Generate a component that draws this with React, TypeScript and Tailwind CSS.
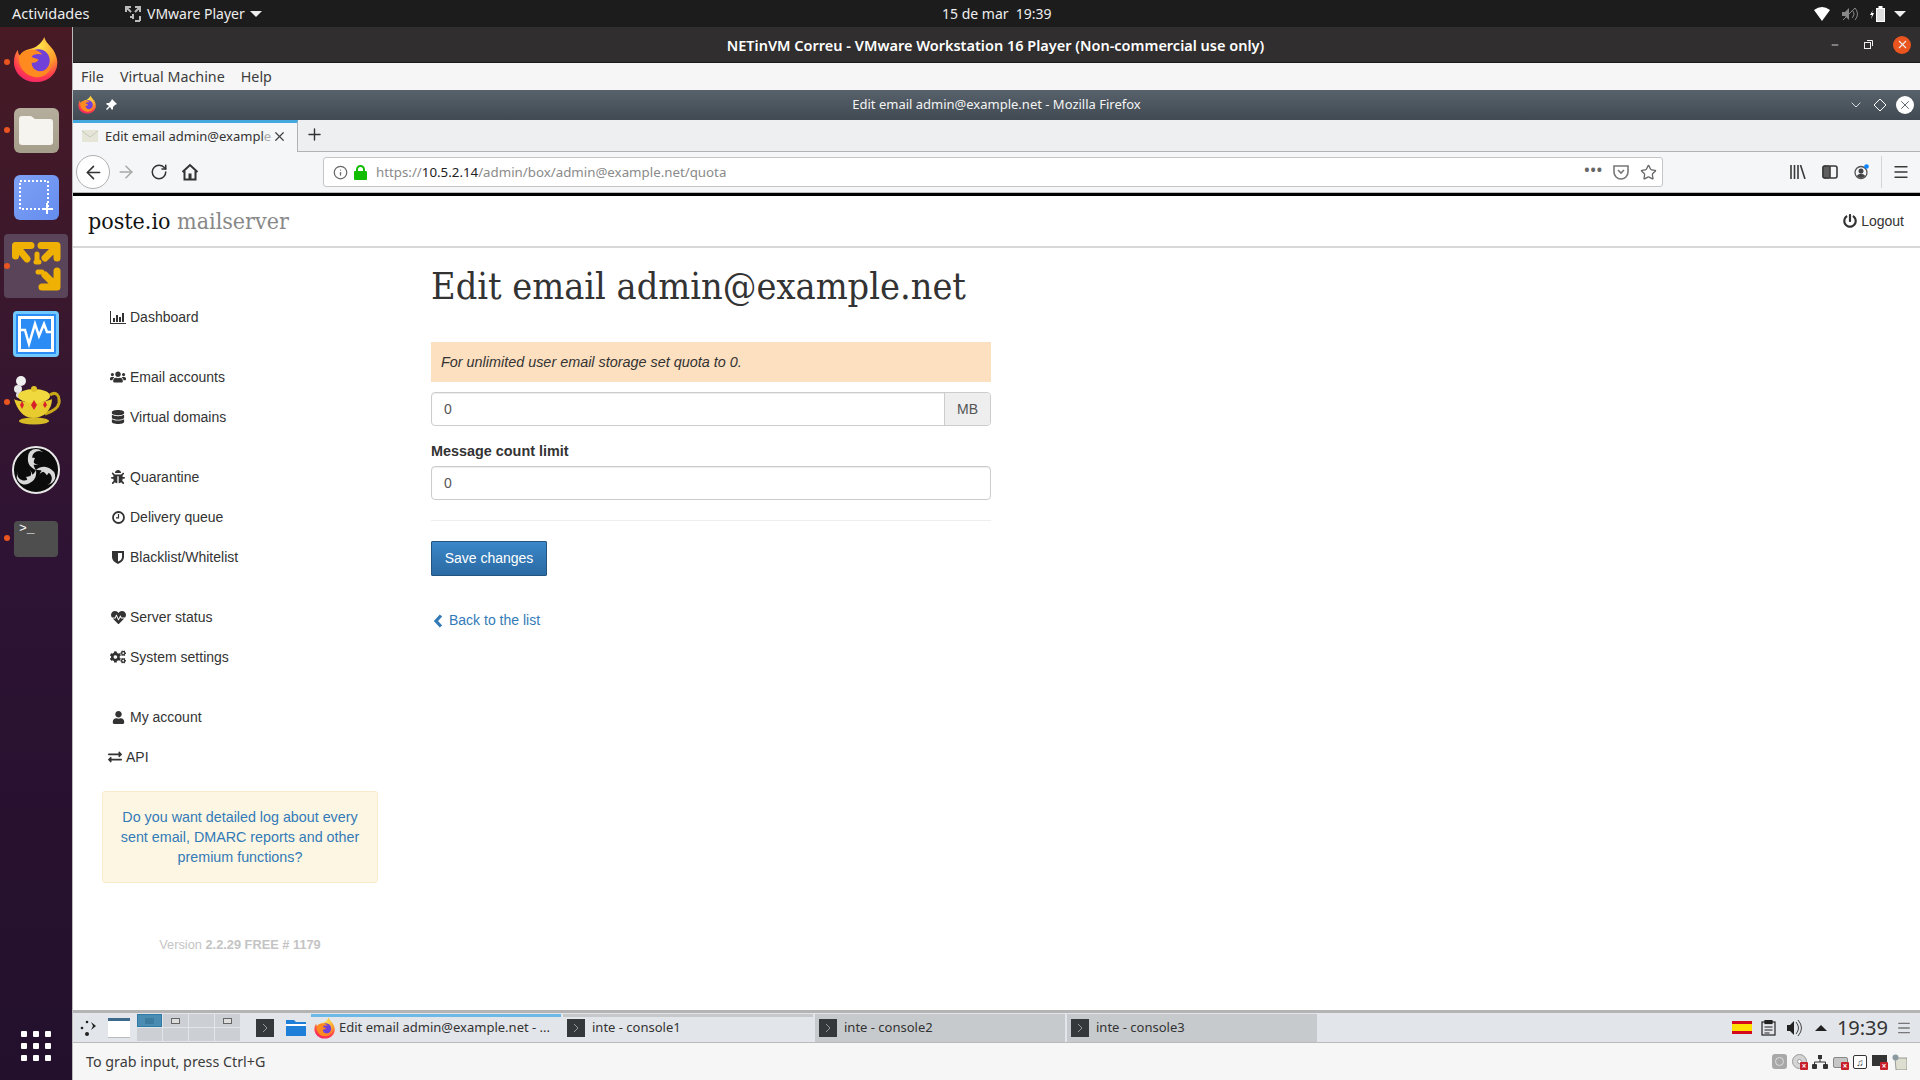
import React from "react";
import { FaUsers, FaDatabase, FaBug, FaHeartbeat, FaCogs, FaUser, FaExchangeAlt, FaPowerOff } from "react-icons/fa";
import { X, Plus, ArrowLeft, ArrowRight, RotateCw, Info, Star, Menu, ChevronDown, Minus } from "lucide-react";

const UB = "font-['Noto_Sans',sans-serif]";
const LS = "font-['Liberation_Sans',Arial,sans-serif]";
const SL = "font-['DejaVu_Serif_Condensed','Liberation_Serif',serif]";

function Firefox({ s = 48 }: { s?: number }) {
  return (
    <svg width={s} height={s} viewBox="0 0 48 48">
      <defs>
        <radialGradient id="ffa" cx="0.6" cy="0.2" r="0.95">
          <stop offset="0" stopColor="#ffe14d" />
          <stop offset="0.45" stopColor="#ff9a2a" />
          <stop offset="0.75" stopColor="#ff3750" />
          <stop offset="1" stopColor="#e31587" />
        </radialGradient>
      </defs>
      <path d="M32 1c1 5 5 8 9 13 5 8 6 17 1 24-5 7-12 9-19 9C11 47 1 38 1 27c0-5 1-9 4-13 0 3 1 5 2 6 2-4 6-6 11-7 5-1 11-5 14-12z" fill="url(#ffa)" />
      <circle cx="26" cy="25" r="11.500" fill="#7040d8" />
      <path d="M6 21c3-5 8-7 13-7 5 0 9 2 11 5-4-1-8-1-11 2 2 2 5 2 7 3-1 3-5 4-7 3 0 5 4 9 9 9 5 0 9-3 11-8 0 9-8 15-16 14C13 41 5 32 6 21z" fill="#ff8a1f" />
    </svg>
  );
}

function Dock() {
  const dot = <span className="absolute left-[4px] top-1/2 -mt-[3px] size-[6px] rounded-full bg-[#e9541f]" />;
  return (
    <aside className="w-[72px] shrink-0 flex flex-col items-center bg-linear-to-b from-[#471a24] via-[#2e1334] to-[#22102c] relative">
      <div className="h-[68px] w-full relative flex items-center justify-center mt-[1px]">{dot}<span className="flex -mt-[5px]"><Firefox s={47} /></span></div>
      <div className="h-[68px] w-full relative flex items-center justify-center">
        {dot}
        <div className="size-[45px] rounded-[6px] bg-linear-to-b from-[#b5ae9c] to-[#a59e8b] flex items-center justify-center">
          <svg width="34" height="30" viewBox="0 0 34 30"><path d="M0 4a3 3 0 0 1 3-3h9l4 3h15a3 3 0 0 1 3 3v20a3 3 0 0 1-3 3H3a3 3 0 0 1-3-3z" fill="#f6f4ef" /></svg>
        </div>
      </div>
      <div className="h-[68px] w-full flex items-center justify-center">
        <div className="size-[45px] -mt-[2px] rounded-[6px] bg-linear-to-br from-[#7ea2f5] to-[#648cee] flex items-center justify-center">
          <svg width="36" height="36" viewBox="0 0 36 36"><rect x="2" y="2" width="28" height="28" fill="none" stroke="#fff" strokeWidth="2" strokeDasharray="2 2" /><path d="M29 24v11M24 30h11" stroke="#fff" strokeWidth="2" /></svg>
        </div>
      </div>
      <div className="h-[68px] w-full relative flex items-center justify-center">
        <div className="w-[64px] h-[64px] rounded-[4px] bg-[#5a4459]">
          <svg width="64" height="64" viewBox="0 0 64 64" fill="none" stroke="#efb103" strokeWidth="7" strokeLinecap="round" strokeLinejoin="round">
            <path d="M27 11.500H11.500V22M13 13l10 12M37 11.500H53V24M52 13 41 24M53 37V53H38M52 52 41 41" />
            <path d="M33 20v6M35 28h-3M38 38h-4" strokeWidth="5" />
          </svg>
        </div>
        {dot}
      </div>
      <div className="h-[68px] w-full flex items-center justify-center">
        <div className="size-[46px] rounded-[4px] bg-[#2b8cf5] border-[3px] border-[#70c8ff] flex items-center justify-center">
          <svg width="36" height="36" viewBox="0 0 36 36"><rect x="1.500" y="1.500" width="33" height="33" fill="none" stroke="#fff" strokeWidth="3" /><path d="M2 14h5l4 14 6-20 4 12 5-12 3 8h9" fill="none" stroke="#fff" strokeWidth="2.500" /></svg>
        </div>
      </div>
      <div className="h-[68px] w-full relative flex items-center justify-center">
        {dot}
        <svg className="-mt-[4px]" width="50" height="50" viewBox="0 0 50 50">
          <circle cx="10" cy="6" r="5" fill="#f0f0f0" /><circle cx="7" cy="14" r="4" fill="#e8e8e8" /><circle cx="8" cy="20" r="3" fill="#ddd" />
          <path d="M39 20c6-4 10 0 9 8-1 6-8 9-14 11" fill="none" stroke="#c9a818" strokeWidth="3" />
          <path d="M3 24c5 4 32 4 38 0 0 11-8 19-19 19C12 43 6 34 3 24z" fill="#e8cb2f" />
          <ellipse cx="23" cy="21" rx="16" ry="7" fill="#f0d93f" /><circle cx="23" cy="14" r="3" fill="#e2c42a" /><ellipse cx="23" cy="46" rx="15" ry="3.500" fill="#d7bb26" />
          <path d="M23 25l3 5-3 5-3-5zM11 26l2 4-2 4-2-4zM34 26l2 4-2 3-2-3z" fill="#d8202a" />
        </svg>
      </div>
      <div className="h-[68px] w-full flex items-center justify-center">
        <svg width="48" height="48" viewBox="0 0 48 48">
          <circle cx="24" cy="24" r="23" fill="#0b0b0b" stroke="#e8e8e8" strokeWidth="2" />
          {[0, 120, 240].map((a) => (
            <g key={a} transform={`rotate(${a} 24 24)`}>
              <circle cx="24" cy="11" r="8" fill="#d8d8d8" />
              <circle cx="27" cy="12" r="7" fill="#0b0b0b" />
              <path d="M16 11c-1 7 3 11 8 13-3-4-3-8-1-12z" fill="#d8d8d8" />
            </g>
          ))}
        </svg>
      </div>
      <div className="h-[68px] w-full relative flex items-center justify-center">
        {dot}
        <div className="w-[44px] h-[36px] mt-[2px] rounded-[4px] bg-[#4e4e4e] relative">
          <span className="absolute left-[5px] top-[1px] text-white text-[13px] leading-[14px] font-['Liberation_Mono',monospace]">&gt;_</span>
        </div>
      </div>
      <div className="mt-auto mb-[19px] grid grid-cols-3 gap-[6px]">
        {Array.from({ length: 9 }).map((_, i) => <span key={i} className="size-[6px] bg-white rounded-[1px]" />)}
      </div>
    </aside>
  );
}

function TopBar() {
  return (
    <header className={`h-[27px] shrink-0 bg-[#1c1c1c] text-[#eeeeee] flex items-center text-[14.500px] ${UB} relative`}>
      <span className="ml-[12px] w-[112px]">Actividades</span>
      <svg width="18" height="18" viewBox="0 0 18 18" fill="none" stroke="#bbb" strokeWidth="2"><path d="M7 2H2v5M3 3l4 4M11 2h5v5M15 3l-4 4M9 9v5M6 12h3M16 16h-5M16 16v-5" /></svg>
      <span className="ml-[5px] text-[14px]">VMware Player</span>
      <span className="ml-[5px] border-x-[6px] border-x-transparent border-t-[6px] border-t-[#eee]" />
      <span className="absolute left-[942px] top-[4px] text-[14px] leading-[19px]">15 de mar&nbsp;&nbsp;19:39</span>
      <div className="ml-auto mr-[14px] flex items-center gap-[12px]">
        <svg width="16" height="14" viewBox="0 0 16 14"><path d="M0 3q8-6 16 0L8 14z" fill="#fff" /></svg>
        <svg width="16" height="14" viewBox="0 0 16 14"><path d="M0 5h3l4-4v12l-4-4H0z" fill="#888" /><path d="M10 3q4 4 0 8M13 1q5 6 0 12M1 13 13 1" stroke="#888" fill="none" /></svg>
        <svg width="15" height="16" viewBox="0 0 15 16"><path d="M3 4 0 9h2l-1 4 3-6H2l1-3z" fill="#fff" /><rect x="6.500" y="2.500" width="8" height="13" fill="#dedede" stroke="#fff" /><rect x="8.500" y="0" width="4" height="2" fill="#fff" /></svg>
        <span className="-ml-[3px] border-x-[6px] border-x-transparent border-t-[6px] border-t-[#eee]" />
      </div>
    </header>
  );
}

function Browser() {
  return (
    <>
      <div className={`h-[30px] shrink-0 bg-linear-to-b from-[#58626c] to-[#414a52] flex items-center text-white text-[13px] relative ${UB}`}>
        <span className="ml-[5px] flex -mt-[1px]"><Firefox s={19} /></span>
        <svg className="ml-[8px] -mt-[1px]" width="12" height="12" viewBox="0 0 12 12"><path d="M7 0l5 5-2 1-2 2 0 2-1 1-2-3-3 3-1-1 3-3L1 5l1-1h2l2-2z" fill="#fff" /></svg>
        <span className="absolute left-0 right-0 text-center text-[#f4f4f4] pointer-events-none">Edit email admin@example.net - Mozilla Firefox</span>
        <div className="ml-auto mr-[6px] flex items-center gap-[9px]">
          <ChevronDown size={16} strokeWidth={1.2} />
          <svg width="14" height="14" viewBox="0 0 14 14"><path d="M7 1l6 6-6 6-6-6z" fill="none" stroke="#fff" /></svg>
          <span className="size-[18px] rounded-full bg-white flex items-center justify-center text-[#3e464d]"><X size={14} strokeWidth={1.4} /></span>
        </div>
      </div>
      <div className={`h-[32px] shrink-0 bg-[#eeeff1] border-b border-[#b0b3b6] flex items-stretch text-[13px] ${UB}`}>
        <div className="w-[225px] h-[32px] bg-[#f5f6f7] border-t-[3px] border-t-[#43a8e0] border-r border-r-[#b0b3b6] flex items-center pl-[9px] pb-[3px] text-[#333]">
          <svg width="16" height="12" viewBox="0 0 16 12"><rect width="16" height="12" fill="#e6e6d8" /><path d="M0 1l8 6 8-6" fill="none" stroke="#c8c8b8" /></svg>
          <span className="ml-[7px] w-[166px] h-[18px] leading-[18px] relative whitespace-nowrap flex">
            <span>Edit email admin@exampl</span>
            <span className="text-[#aaa]">e</span>
          </span>
          <X size={15} className="ml-[1px] text-[#444]" />
        </div>
        <span className="ml-[7px] self-center text-[#333] mb-[2px]"><Plus size={19} strokeWidth={1.8} /></span>
      </div>
      <div className={`h-[41px] shrink-0 bg-[#f5f6f7] border-b border-[#b9bbbd] flex items-center relative ${UB}`}>
        <span className="ml-[3px] size-[34px] rounded-full bg-white border border-[#b0b0b0] flex items-center justify-center text-[#333]"><ArrowLeft size={21} strokeWidth={1.8} /></span>
        <span className="ml-[6px] text-[#a8a8a8]"><ArrowRight size={20} strokeWidth={1.8} /></span>
        <span className="ml-[14px] text-[#333]"><RotateCw size={18} strokeWidth={2} /></span>
        <svg className="ml-[13px]" width="18" height="18" viewBox="0 0 18 18" fill="none" stroke="#333" strokeWidth="2"><path d="M1.500 9 9 2l7.500 7M3.500 8v8.500h11V8" /><rect x="7.500" y="10.500" width="3" height="6" fill="#333" stroke="none" /></svg>
        <div className="ml-[124px] w-[1340px] h-[30px] bg-white border border-[#c4c6c8] rounded-[3px] flex items-center text-[13.300px]">
          <Info size={15} className="ml-[9px] text-[#666]" />
          <svg className="ml-[6px]" width="13" height="15" viewBox="0 0 13 15"><path d="M3 7V4.500a3.500 3.500 0 0 1 7 0V7" fill="none" stroke="#12bc00" strokeWidth="2" /><rect y="6" width="13" height="9" rx="1" fill="#12bc00" /></svg>
          <span className="ml-[9px] pt-[1px] text-[#8a8a8a]">https://<span className="text-[#222]">10.5.2.14</span>/admin/box/admin@example.net/quota</span>
          <span className="ml-auto text-[#666] tracking-[1px] font-bold leading-[10px] text-[14px] -mt-[5px]">•••</span>
          <svg className="ml-[10px]" width="16" height="15" viewBox="0 0 16 15"><path d="M1 1h14v6a7 7 0 0 1-14 0z" fill="none" stroke="#777" strokeWidth="1.600" /><path d="M5 5l3 3 3-3" fill="none" stroke="#777" strokeWidth="1.600" /></svg>
          <Star size={17} strokeWidth={1.8} className="ml-[11px] mr-[5px] text-[#666]" />
        </div>
        <div className="ml-auto flex items-center text-[#3a3a3a]">
          <svg width="16" height="14" viewBox="0 0 16 14" stroke="#3a3a3a" strokeWidth="1.600" fill="none"><path d="M1 0v14M4.500 0v14M8 0v14M10.500 0l4.500 14" /></svg>
          <svg className="ml-[16px]" width="16" height="14" viewBox="0 0 16 14" fill="none" stroke="#3a3a3a" strokeWidth="1.600"><rect x="1" y="1" width="14" height="12" rx="2" /><path d="M8 1v12" /><rect x="1" y="1" width="6" height="12" rx="2" fill="#3a3a3a" opacity=".8" /></svg>
          <svg className="ml-[16px]" width="16" height="16" viewBox="0 0 16 16"><circle cx="7" cy="8.500" r="6" fill="none" stroke="#555" strokeWidth="1.300" /><circle cx="7" cy="7" r="2.500" fill="#444" /><path d="M2.500 12q4.500-5 9 0-4.500 4-9 0z" fill="#444" /><circle cx="12.500" cy="2.500" r="2.300" fill="#0a84ff" /></svg>
          <span className="ml-[11px] h-[32px] w-px bg-[#d4d4d4]" />
          <Menu size={18} strokeWidth={1.8} className="ml-[10px] mr-[10px]" />
        </div>
      </div>
      <div className="h-[3px] shrink-0 bg-black" />
    </>
  );
}

const BarIcon = () => (
  <svg width="16" height="13" viewBox="0 0 16 13" fill="#333"><path d="M0 0h1v12h15v1H0z" /><rect x="3" y="7" width="2" height="4" /><rect x="6" y="4" width="2" height="7" /><rect x="9" y="6" width="2" height="5" /><rect x="12" y="2" width="2" height="9" /></svg>
);
const ClockIcon = () => (
  <svg width="13" height="13" viewBox="0 0 13 13" fill="none" stroke="#333"><circle cx="6.500" cy="6.500" r="5.500" strokeWidth="1.800" /><path d="M6.500 3v3.800H4" strokeWidth="1.200" /></svg>
);
const ShieldIcon = () => (
  <svg width="12" height="14" viewBox="0 0 12 14" fill="#333"><path d="M0 1h12v6c0 3-2 5-6 7-4-2-6-4-6-7zM6 3v8.500c2.500-1 4-2.500 4-4.500V3z" fillRule="evenodd" /></svg>
);

function NavItem({ icon, label }: { icon: React.ReactNode; label: string }) {
  return (
    <div className="h-[40px] flex items-center pl-[34px] text-[#333]">
      <span className="w-[23px] pr-[1px] flex justify-center text-[#333]">{icon}</span>
      <span>{label}</span>
    </div>
  );
}

function Sidebar() {
  return (
    <nav className={`w-[358px] shrink-0 pt-[49px] text-[14px] ${LS}`}>
      <NavItem icon={<BarIcon />} label="Dashboard" />
      <div className="h-[20px]" />
      <NavItem icon={<FaUsers size={16} />} label="Email accounts" />
      <NavItem icon={<FaDatabase size={14} />} label="Virtual domains" />
      <div className="h-[20px]" />
      <NavItem icon={<FaBug size={14} />} label="Quarantine" />
      <NavItem icon={<ClockIcon />} label="Delivery queue" />
      <NavItem icon={<ShieldIcon />} label="Blacklist/Whitelist" />
      <div className="h-[20px]" />
      <NavItem icon={<FaHeartbeat size={15} />} label="Server status" />
      <NavItem icon={<FaCogs size={16} />} label="System settings" />
      <div className="h-[20px]" />
      <NavItem icon={<FaUser size={13} />} label="My account" />
      <div className="h-[40px] flex items-center pl-[35px] text-[#333]"><FaExchangeAlt size={14} /><span className="ml-[4px]">API</span></div>
      <div className="ml-[29px] mt-[14px] w-[276px] h-[92px] bg-[#fcf6e3] border border-[#faebcc] rounded-[3px] flex items-center justify-center text-center px-[14px] text-[14.300px] leading-[20px] text-[#337ab7]">
        Do you want detailed log about every sent email, DMARC reports and other premium functions?
      </div>
      <div className="ml-[29px] w-[276px] mt-[52px] text-center text-[12.800px] text-[#c4c4c4]">Version <b>2.2.29 FREE # 1179</b></div>
    </nav>
  );
}

function Main() {
  return (
    <main className={`w-[560px] text-[14px] text-[#333] ${LS}`}>
      <h1 className={`mt-[15px] h-[47px] text-[37.500px] leading-[47px] text-[#333] whitespace-nowrap ${SL}`}>Edit email admin@example.net</h1>
      <div className="mt-[32px] h-[40px] bg-[#fde0c0] flex items-center px-[10px] pt-[1px] italic text-[14.400px]">For unlimited user email storage set quota to 0.</div>
      <div className="mt-[10px] h-[34px] flex border border-[#ccc] rounded-[4px] text-[#555] shadow-[inset_0_1px_1px_rgba(0,0,0,0.075)]">
        <span className="flex-1 flex items-center px-[12px]">0</span>
        <span className="w-[46px] flex items-center justify-center bg-[#eee] border-l border-[#ccc] rounded-r-[3px]">MB</span>
      </div>
      <label className="block mt-[15px] font-bold leading-[20px] text-[14.400px]">Message count limit</label>
      <div className="mt-[5px] h-[34px] flex items-center px-[12px] border border-[#ccc] rounded-[4px] text-[#555] shadow-[inset_0_1px_1px_rgba(0,0,0,0.075)]">0</div>
      <hr className="mt-[20px] border-[#eee]" />
      <button className="mt-[20px] block w-[116px] h-[35px] text-white bg-linear-to-b from-[#3b87c8] to-[#2a6aa3] border border-[#245580] rounded-[1px]">Save changes</button>
      <a className="mt-[34px] flex items-center text-[#337ab7]">
        <svg className="ml-[2px] mr-[6px]" width="10" height="14" viewBox="0 0 10 14"><path d="M8 1.500 3 7l5 5.500" fill="none" stroke="#337ab7" strokeWidth="3.200" /></svg>
        Back to the list
      </a>
    </main>
  );
}

function Task({ label, cls, icon, gap }: { label: string; cls: string; icon: React.ReactNode; gap: string }) {
  return (
    <div className={`${cls} w-[250px] h-[28px] border-t-[3px] pb-[2px] flex items-center overflow-hidden whitespace-nowrap`}>
      {icon}
      <span className={gap}>{label}</span>
    </div>
  );
}
const Term = () => <span className="ml-[3px] size-[18px] bg-[#34383b] flex items-center justify-center"><svg width="6" height="10" viewBox="0 0 6 10"><path d="M1 1l4 4-4 4" stroke="#999" fill="none" /></svg></span>;
const TaskTerm = () => <span className="ml-[1px] flex"><Term /></span>;

const Mini = ({ c }: { c: string }) => <span className={`w-[9px] h-[6px] border ${c}`} />;

function TaskBar() {
  const cell = "h-[13px] bg-[#ccd0d4] flex items-center justify-center";
  return (
    <div className={`h-[33px] shrink-0 bg-[#e2e5e9] border-t-[3px] border-t-[#b4b4b4] border-b border-b-[#b8babc] flex items-center text-[13px] text-[#333] ${UB}`}>
      <svg className="ml-[7px]" width="18" height="18" viewBox="0 0 18 18" fill="#222"><circle cx="2" cy="9" r="1.300" /><circle cx="7" cy="3" r="1.300" /><circle cx="7" cy="15" r="2" /><path d="M11 3l5 4-5 4 2-4z" /></svg>
      <span className="ml-[10px] w-[22px] h-[19px] bg-white border-t-[3px] border-[#3d6a8c] shadow-[0_1px_0_#bbb]" />
      <div className="ml-[7px] grid grid-cols-4 gap-[1px] w-[103px]">
        <span className="h-[13px] bg-[#4a8cb2] border border-[#2e7aa6] flex items-center justify-center"><Mini c="bg-[#3d7ca0] border-[#3d7ca0]" /></span>
        <span className={cell}><Mini c="border-[#666] bg-[#ddd]" /></span>
        <span className={cell} />
        <span className={cell}><Mini c="border-[#666] bg-[#ddd]" /></span>
        <span className={cell} /><span className={cell} /><span className={cell} /><span className={cell} />
      </div>
      <span className="ml-[13px] block"><Term /></span>
      <svg className="ml-[12px]" width="20" height="17" viewBox="0 0 20 17"><path d="M0 1h8l2 2h10v14H0z" fill="#1e7fd8" /><path d="M0 5h20v2H0z" fill="#fff" /></svg>
      <span className="w-[5px]" />
      <Task cls="border-t-[#6cb8e6]" gap="ml-[3px]" icon={<span className="ml-[3px] flex"><Firefox s={22} /></span>} label="Edit email admin@example.net - ..." />
      <Task cls="ml-[2px] border-t-[#c6c8ca]" gap="ml-[7px]" icon={<TaskTerm />} label="inte - console1" />
      <Task cls="ml-[2px] bg-[#c6cacd] border-t-[#c6cacd]" gap="ml-[7px]" icon={<TaskTerm />} label="inte - console2" />
      <Task cls="ml-[2px] bg-[#c6cacd] border-t-[#c6cacd]" gap="ml-[7px]" icon={<TaskTerm />} label="inte - console3" />
      <div className="ml-auto flex items-center mr-[8px]">
        <svg width="20" height="13" viewBox="0 0 20 13"><rect width="20" height="13" fill="#d4091d" /><rect y="3" width="20" height="7" fill="#ffe000" /></svg>
        <svg className="ml-[9px]" width="15" height="16" viewBox="0 0 15 16" fill="none" stroke="#222" strokeWidth="1.200"><rect x="1" y="2" width="13" height="13" /><rect x="4" y="0.500" width="7" height="3" fill="#222" /><path d="M3.500 7h8M3.500 10h8M3.500 13h5" /></svg>
        <svg className="ml-[11px]" width="16" height="16" viewBox="0 0 16 16"><path d="M0 5h3l4-4v14l-4-4H0z" fill="#222" /><path d="M9 2q5 6 0 12M11 0q7 8 0 16" stroke="#444" fill="none" /></svg>
        <span className="ml-[12px] border-x-[6px] border-x-transparent border-b-[6px] border-b-[#222]" />
        <span className="ml-[10px] text-[20px] text-[#333] leading-[24px]">19:39</span>
        <Menu size={16} className="ml-[8px] text-[#777]" />
      </div>
    </div>
  );
}

function Dev({ kind }: { kind: string }) {
  return (
    <span className="relative w-[15px] h-[15px] block">
      {kind === "cd" && <span className="absolute inset-0 rounded-full bg-[#d4d4d4] border border-[#999] flex items-center justify-center"><span className="size-[5px] rounded-full bg-white border border-[#999]" /></span>}
      {kind === "pr" && <span className="absolute inset-x-0 top-[3px] bottom-[1px] rounded-[2px] bg-[#c6c6c6] border border-[#888]" />}
      {kind === "mon" && <span className="absolute inset-x-0 top-[1px] h-[11px] bg-[#333]" />}
      <span className="absolute right-[-1px] bottom-[-1px] size-[8px] bg-[#c8202a] rounded-[1px] text-white text-[8px] leading-[8px] text-center font-bold">×</span>
    </span>
  );
}

function StatusBar() {
  return (
    <div className={`h-[37px] shrink-0 bg-[#f6f6f6] flex items-center text-[14.300px] text-[#3c3c3c] ${UB}`}>
      <span className="ml-[13px]">To grab input, press Ctrl+G</span>
      <div className="ml-auto mr-[13px] flex items-center gap-[5px]">
        <span className="size-[15px] rounded-[3px] bg-[#a8a8a8] flex items-center justify-center"><span className="size-[9px] rounded-full border border-[#ddd]" /></span>
        <Dev kind="cd" />
        <svg width="16" height="14" viewBox="0 0 16 14" fill="#333"><rect x="6" y="0" width="4" height="4" /><rect x="0" y="9" width="5" height="5" rx="1" /><rect x="11" y="9" width="5" height="5" rx="1" /><path d="M8 4v3M2.500 9V7h11v2" stroke="#333" fill="none" /></svg>
        <Dev kind="pr" />
        <span className="size-[14px] rounded-[2px] border border-[#333] bg-white text-[10px] leading-[12px] text-center">♫</span>
        <Dev kind="mon" />
        <svg width="15" height="16" viewBox="0 0 15 16"><path d="M3 4h12v12H4z" fill="#ddddd0" stroke="#666" strokeWidth=".6" /><circle cx="3.500" cy="3.500" r="3" fill="#8a9aa0" /></svg>
      </div>
    </div>
  );
}

export default function App() {
  return (
    <div className="w-[1920px] h-[1080px] flex flex-col overflow-hidden bg-white">
      <TopBar />
      <div className="flex-1 flex min-h-0">
        <Dock />
        <div className="flex-1 flex flex-col min-w-0 border-l border-[#bbb]">
          <div className={`h-[36px] shrink-0 bg-[#302e2e] border-b border-[#1c1c1c] flex items-center relative text-white ${UB}`}>
            <span className="absolute left-0 right-0 text-center text-[14.500px] font-semibold pr-[2px] pt-[2px]">NETinVM Correu - VMware Workstation 16 Player (Non-commercial use only)</span>
            <div className="ml-auto flex items-center mr-[9px] text-[#eee]">
              <Minus size={10} />
              <svg className="ml-[24px]" width="9" height="9" viewBox="0 0 9 9" fill="none" stroke="#eee"><rect x=".5" y="2.500" width="6" height="6" /><path d="M3 .5h5.500V6" /></svg>
              <span className="ml-[20px] size-[18px] rounded-full bg-[#e9541f] flex items-center justify-center"><X size={13} /></span>
            </div>
          </div>
          <div className={`h-[27px] shrink-0 bg-[#f6f6f6] flex items-center text-[14.300px] text-[#3c3c3c] ${UB}`}>
            <span className="ml-[8px]">File</span><span className="ml-[16px]">Virtual Machine</span><span className="ml-[16px]">Help</span>
          </div>
          <Browser />
          <div className={`h-[52px] shrink-0 border-b-2 border-[#d8d8d8] flex items-center ${LS} relative`}>
            <span className={`ml-[15px] pt-[1px] text-[23px] text-[#111] ${SL}`}>poste.io <span className="text-[#888]">mailserver</span></span>
            <span className="ml-auto mr-[16px] flex items-center text-[14px] text-[#333]"><FaPowerOff size={14} className="mr-[4px]" />Logout</span>
          </div>
          <div className="flex-1 flex min-h-0 bg-white">
            <Sidebar />
            <Main />
          </div>
          <TaskBar />
          <StatusBar />
        </div>
      </div>
    </div>
  );
}
